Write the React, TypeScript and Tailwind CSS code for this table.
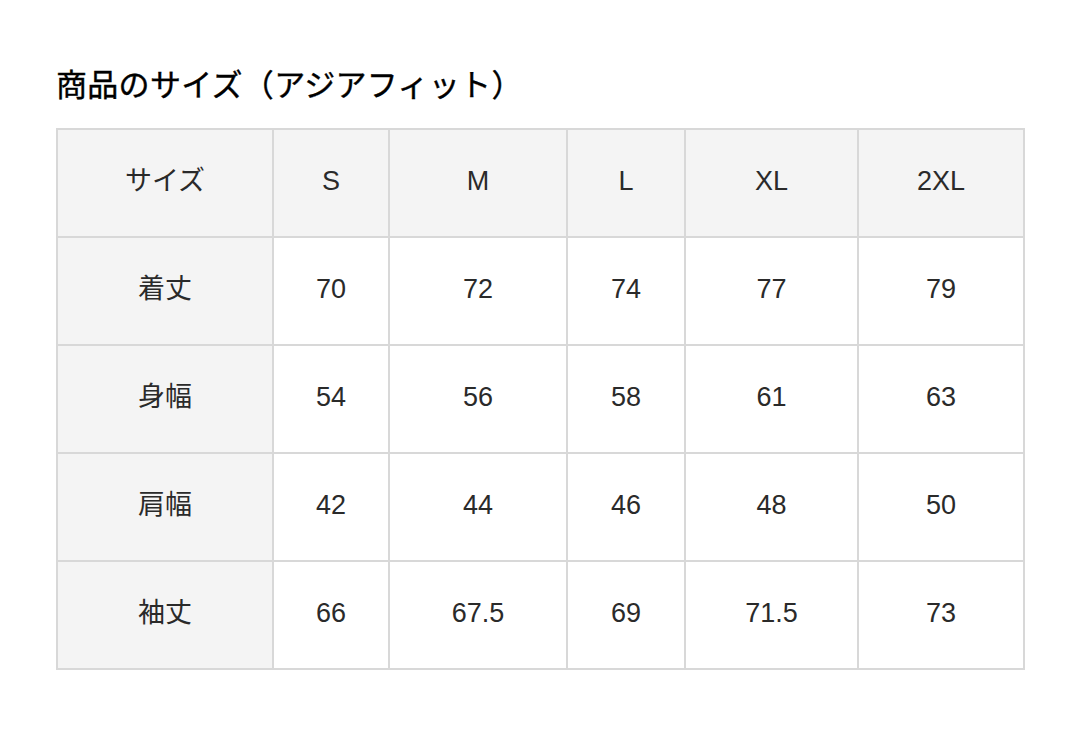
const sizes = ["S", "M", "L", "XL", "2XL"];

const rows = [
  { label: "着丈", values: ["70", "72", "74", "77", "79"] },
  { label: "身幅", values: ["54", "56", "58", "61", "63"] },
  { label: "肩幅", values: ["42", "44", "46", "48", "50"] },
  { label: "袖丈", values: ["66", "67.5", "69", "71.5", "73"] },
];

function Cell({ children, gray }: { children: React.ReactNode; gray?: boolean }) {
  return (
    <div className={`flex items-center justify-center h-[106px] pb-[4px] ${gray ? "bg-[#f4f4f4]" : "bg-white"}`}>
      {children}
    </div>
  );
}

export default function App() {
  return (
    <div
      className="w-[1080px] h-[742px] bg-white text-[#2a2a2a] pt-[66px] pl-[56px]"
      style={{ fontFamily: '"Liberation Sans", "Noto Sans CJK JP", sans-serif' }}
    >
      <h1 className="text-[31px] leading-[40px] font-normal text-[#000] mb-[22px] tracking-[0.3px] [-webkit-text-stroke:0.4px_#000]">
        商品のサイズ（アジアフィット）
      </h1>
      <div className="inline-grid grid-cols-[214px_114px_176px_116px_171px_164px] gap-[2px] p-[2px] bg-[#d8d8d8] text-[27px]">
        <Cell gray>サイズ</Cell>
        {sizes.map((s) => (
          <Cell gray key={s}>{s}</Cell>
        ))}
        {rows.map((r) => (
          <>
            <Cell gray key={r.label}>{r.label}</Cell>
            {r.values.map((v, i) => (
              <Cell key={r.label + i}>{v}</Cell>
            ))}
          </>
        ))}
      </div>
    </div>
  );
}
